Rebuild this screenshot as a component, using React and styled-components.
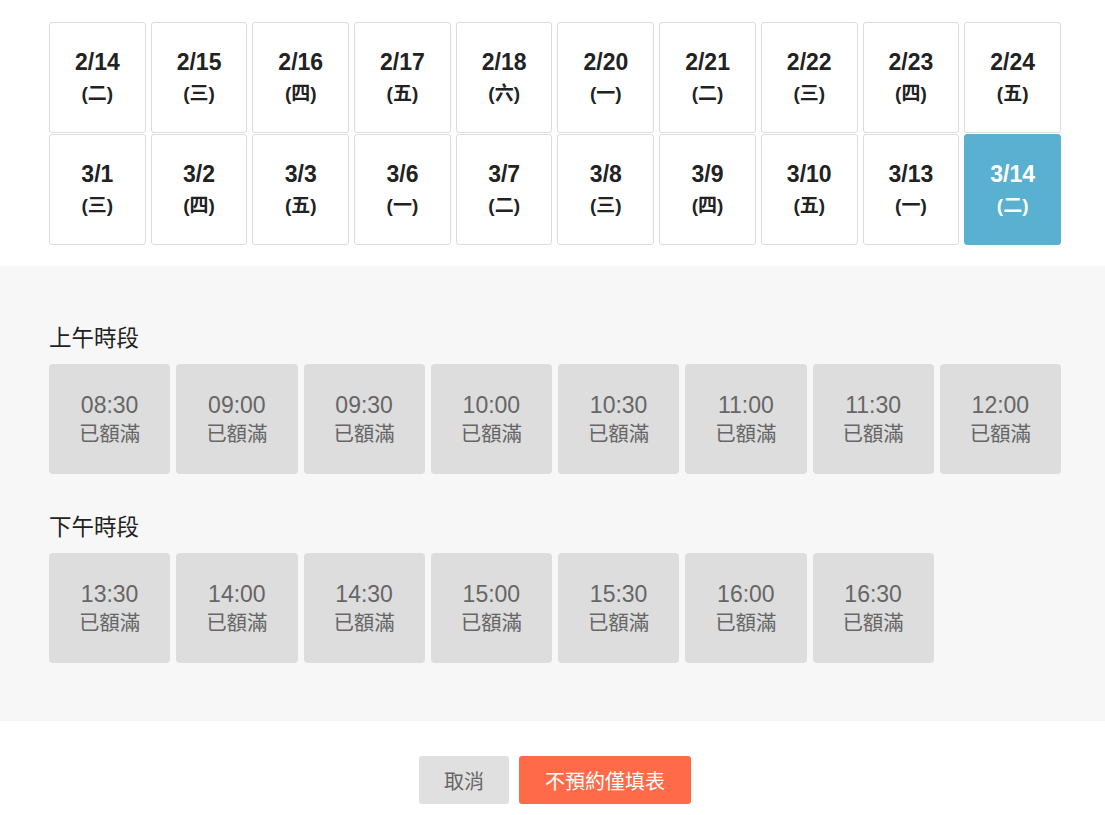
import React from 'react';
import styled, { createGlobalStyle } from 'styled-components';

const GlobalStyle = createGlobalStyle`
  body {
    margin: 0;
    background: #fff;
    font-family: "Liberation Sans", Arial, "Noto Sans CJK TC", sans-serif;
  }
`;

const Page = styled.div`
  width: 1105px;
  padding: 22px 0 0;
`;

const Inner = styled.div`
  padding: 0 44px 0 49px;
`;

const DateGrid = styled.div`
  display: grid;
  grid-template-columns: repeat(10, 1fr);
  column-gap: 5px;
  row-gap: 1px;
`;

const DateCard = styled.button`
  height: 111px;
  box-sizing: border-box;
  display: flex;
  flex-direction: column;
  align-items: center;
  justify-content: center;
  border: 1px solid ${(p) => (p.$active ? '#5ab0d0' : '#dcdcdc')};
  border-radius: 3px;
  background: ${(p) => (p.$active ? '#5ab0d0' : '#fff')};
  color: ${(p) => (p.$active ? '#fff' : '#222')};
  font-family: inherit;
  font-weight: bold;
  padding: 0;
  cursor: pointer;
`;

const DateText = styled.span`
  font-size: 23px;
  line-height: 26px;
  margin-top: 1px;
`;

const Weekday = styled.span`
  font-size: 19px;
  line-height: 26px;
  margin-top: 6px;
  font-family: "Liberation Sans", "Noto Sans CJK TC", sans-serif;
`;

const SlotSection = styled.section`
  margin-top: 21px;
  background: #f7f7f7;
  padding: 59px 0 58px;
`;

const GroupTitle = styled.h3`
  margin: ${(p) => (p.$first ? '0' : '40px')} 0 16px;
  font-size: 22.5px;
  line-height: 23px;
  font-weight: normal;
  color: #222;
  font-family: "Noto Sans CJK TC", sans-serif;
`;

const SlotGrid = styled.div`
  display: grid;
  grid-template-columns: repeat(8, 1fr);
  gap: 6px;
`;

const Slot = styled.div`
  height: 110px;
  border-radius: 4px;
  background: #dddddd;
  color: #666;
  display: flex;
  flex-direction: column;
  align-items: center;
  justify-content: center;
`;

const SlotTime = styled.span`
  font-size: 23px;
  line-height: 26px;
  margin-top: -2px;
`;

const SlotStatus = styled.span`
  font-size: 20.5px;
  line-height: 26px;
  margin-top: 1px;
  font-family: "Noto Sans CJK TC", sans-serif;
`;

const Actions = styled.div`
  display: flex;
  justify-content: center;
  gap: 10px;
  margin-top: 35px;
`;

const ActionButton = styled.button`
  height: 48px;
  padding: 0 ${(p) => (p.$primary ? '26px' : '25px')};
  border: none;
  border-radius: 3px;
  background: ${(p) => (p.$primary ? '#ff6a48' : '#e0e0e0')};
  color: ${(p) => (p.$primary ? '#fff' : '#666')};
  font-size: 20px;
  font-family: "Noto Sans CJK TC", sans-serif;
  cursor: pointer;
`;

const dates = [
  ['2/14', '二'], ['2/15', '三'], ['2/16', '四'], ['2/17', '五'], ['2/18', '六'],
  ['2/20', '一'], ['2/21', '二'], ['2/22', '三'], ['2/23', '四'], ['2/24', '五'],
  ['3/1', '三'], ['3/2', '四'], ['3/3', '五'], ['3/6', '一'], ['3/7', '二'],
  ['3/8', '三'], ['3/9', '四'], ['3/10', '五'], ['3/13', '一'], ['3/14', '二'],
];

const morning = ['08:30', '09:00', '09:30', '10:00', '10:30', '11:00', '11:30', '12:00'];
const afternoon = ['13:30', '14:00', '14:30', '15:00', '15:30', '16:00', '16:30'];

const SlotGroup = ({ title, times, first }) => (
  <>
    <GroupTitle $first={first}>{title}</GroupTitle>
    <SlotGrid>
      {times.map((t) => (
        <Slot key={t}>
          <SlotTime>{t}</SlotTime>
          <SlotStatus>已額滿</SlotStatus>
        </Slot>
      ))}
    </SlotGrid>
  </>
);

const App = () => (
  <Page>
    <GlobalStyle />
    <Inner>
      <DateGrid>
        {dates.map(([d, w]) => (
          <DateCard key={d} $active={d === '3/14'}>
            <DateText>{d}</DateText>
            <Weekday>({w})</Weekday>
          </DateCard>
        ))}
      </DateGrid>
    </Inner>
    <SlotSection>
      <Inner>
        <SlotGroup title="上午時段" times={morning} first />
        <SlotGroup title="下午時段" times={afternoon} />
      </Inner>
    </SlotSection>
    <Inner>
      <Actions>
        <ActionButton>取消</ActionButton>
        <ActionButton $primary>不預約僅填表</ActionButton>
      </Actions>
    </Inner>
  </Page>
);

export default App;
